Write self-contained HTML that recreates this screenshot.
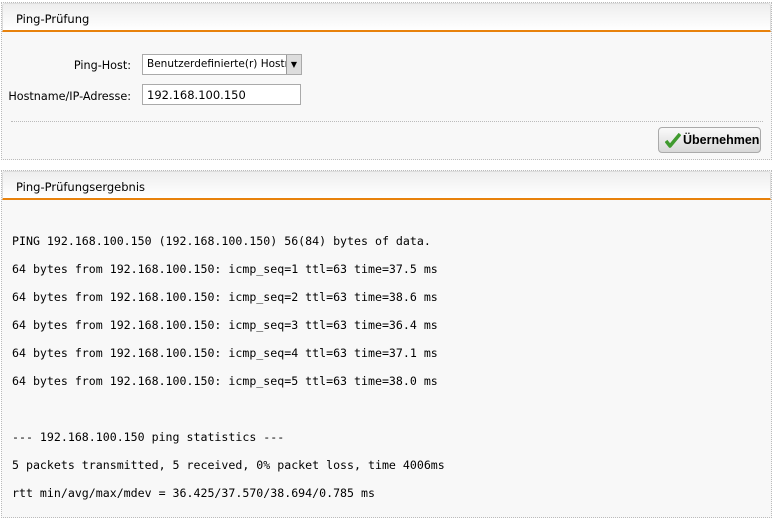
<!DOCTYPE html>
<html><head><style>
body{margin:0;background:#fff;width:776px;height:519px;overflow:hidden;font-family:"DejaVu Sans","Liberation Sans",sans-serif;font-size:11px;color:#000}
.panel{position:absolute;left:1px;width:769px;border:1px dotted #bbb;background:#f8f8f8}
.hd{height:29px;background:linear-gradient(#eee,#fff);border:1px solid #ddd;border-radius:3px 3px 0 0;border-bottom:2px solid #e8820c;box-sizing:border-box;padding:8px 0 0 13px;font-size:11.5px}
.lbl{position:absolute;text-align:right;right:640px;white-space:nowrap;font-size:11.2px}
.in{position:absolute;left:140px;width:158px;height:21px;border:1px solid #aaa;background:#fff;box-sizing:border-box;padding:3px 4px;font-size:11px;white-space:nowrap;overflow:hidden}
pre{margin:0;position:absolute;left:10px;top:56px;font-family:"DejaVu Sans Mono","Liberation Mono",monospace;font-size:11.6px;line-height:28px}
.btn{position:absolute;left:658px;top:127px;width:103px;height:26px;border:1px solid #aaa;border-radius:4px;background:linear-gradient(#fafafa,#d8d8d8);box-sizing:border-box;font-weight:bold;font-family:"Liberation Sans",sans-serif;font-size:12.5px;padding:5px 0 0 24px}
</style></head><body>
<div class="panel" style="top:2px;height:156px">
<div class="hd">Ping-Prüfung</div>
<div class="lbl" style="top:56px">Ping-Host:</div>
<div class="in" style="top:51px;width:160px;padding-right:16px;font-size:10.5px">Benutzerdefinierte(r) Hostname<span style="position:absolute;right:0;top:0;width:14px;height:19px;background:#ddd;border-left:1px solid #999;font-size:8px;text-align:center;line-height:19px">▼</span></div>
<div class="lbl" style="top:87px">Hostname/IP-Adresse:</div>
<div class="in" style="top:81px;width:159px;font-size:11.5px">192.168.100.150</div>
<div style="position:absolute;left:9px;right:8px;top:118px;border-top:1px dotted #bbb"></div>
</div>
<div class="btn"><svg style="position:absolute;left:6px;top:5px" width="16" height="15" viewBox="0 0 16 15"><path d="M1 8 L5 13 L15 1" stroke="#3f9a2e" stroke-width="3.5" fill="none" stroke-linejoin="round"/></svg>Übernehmen</div>
<div class="panel" style="top:170px;height:346px">
<div class="hd">Ping-Prüfungsergebnis</div>
<pre>PING 192.168.100.150 (192.168.100.150) 56(84) bytes of data.
64 bytes from 192.168.100.150: icmp_seq=1 ttl=63 time=37.5 ms
64 bytes from 192.168.100.150: icmp_seq=2 ttl=63 time=38.6 ms
64 bytes from 192.168.100.150: icmp_seq=3 ttl=63 time=36.4 ms
64 bytes from 192.168.100.150: icmp_seq=4 ttl=63 time=37.1 ms
64 bytes from 192.168.100.150: icmp_seq=5 ttl=63 time=38.0 ms

--- 192.168.100.150 ping statistics ---
5 packets transmitted, 5 received, 0% packet loss, time 4006ms
rtt min/avg/max/mdev = 36.425/37.570/38.694/0.785 ms</pre>
</div>
</body></html>
